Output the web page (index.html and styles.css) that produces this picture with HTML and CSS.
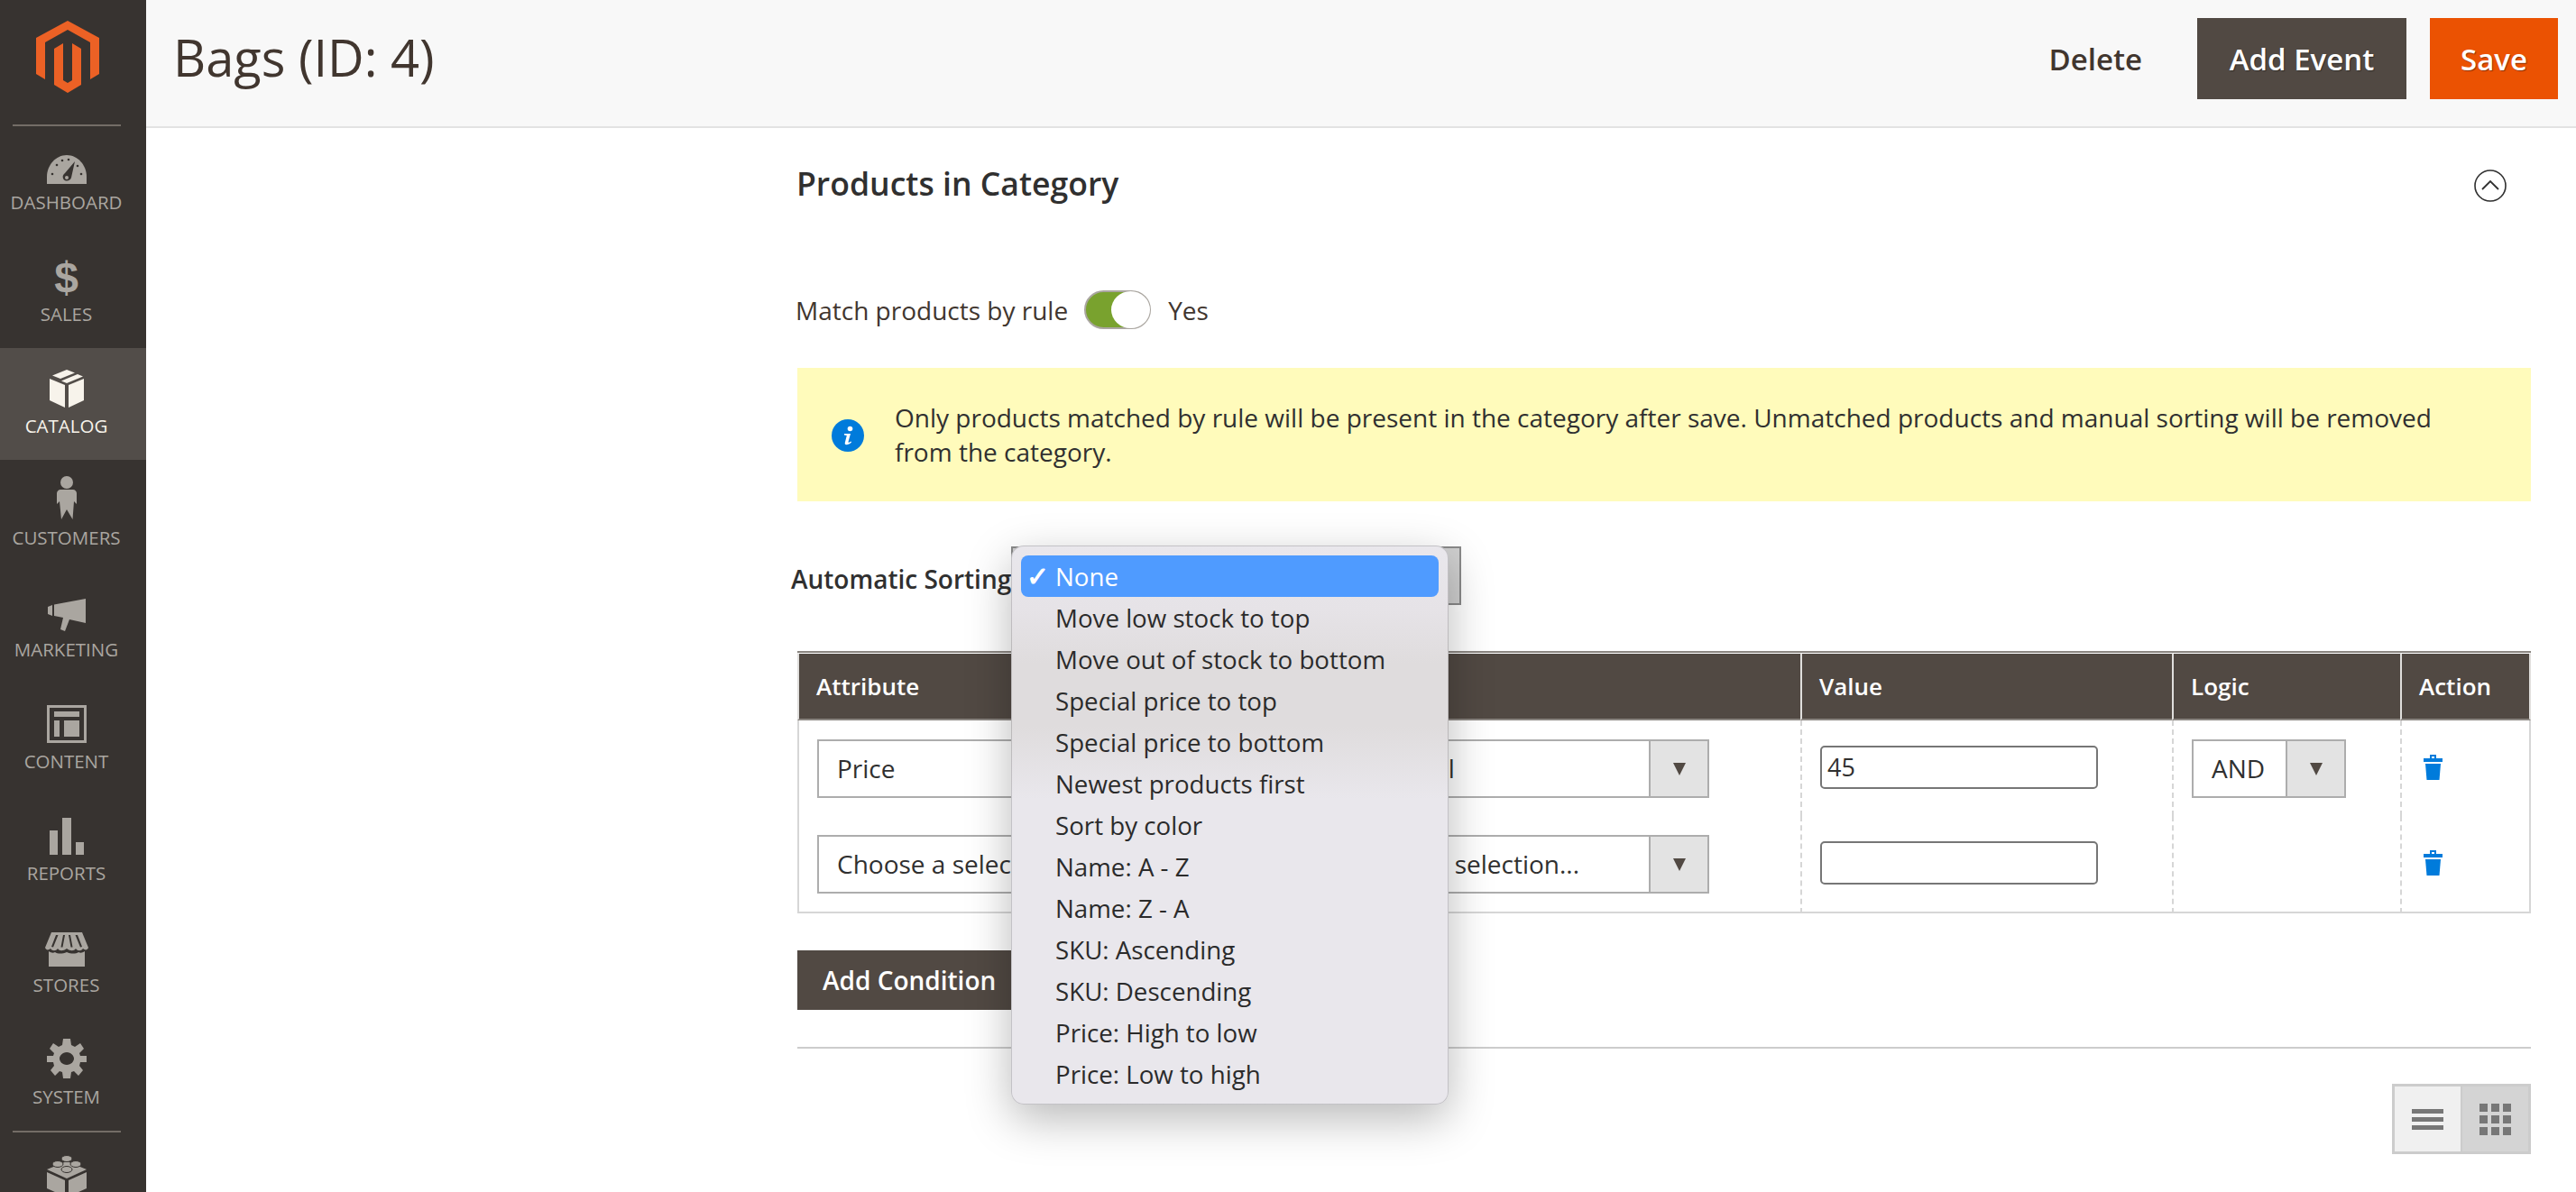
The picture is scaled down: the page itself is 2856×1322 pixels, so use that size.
FILE: index.html
```html
<!DOCTYPE html>
<html lang="en">
<head>
    <meta charset="UTF-8">
    <title>Bags (ID: 4)</title>
    <link rel="stylesheet" href="styles.css">
</head>
<body>
<div class="page">
    <aside class="menu">
        <div class="logo">
            <svg width="70" height="80" viewBox="0 0 70 80"><path d="M35 0L70 19V59L60 65V24L35 10L10 24V65L0 59V19Z"/><path d="M20 31L30 25V66L35 69L40 66V25L50 31V71L35 80L20 71Z"/></svg>
        </div>
        <div class="menu-sep"></div>
        <a class="menu-item">
            <span class="menu-icon"><svg width="44" height="32" viewBox="0 0 44 32"><path d="M0 32V24C0 11 10 0 22 0S44 11 44 24V32Z"/><g fill="#373330"><circle cx="6" cy="21" r="1.3"/><circle cx="11" cy="11" r="1.3"/><circle cx="17" cy="6" r="1.3"/><circle cx="24" cy="5" r="1.3"/><circle cx="38" cy="21" r="1.3"/><circle cx="34" cy="12" r="1.3"/><path d="M31 7L27 25C26 29 20 30 18 26C17 23 18 22 20 20Z"/></g><circle cx="22" cy="25" r="2" fill="#aaa6a0"/></svg></span>
            <span class="menu-label">Dashboard</span>
        </a>
        <a class="menu-item">
            <span class="menu-icon"><span class="dollar">$</span></span>
            <span class="menu-label">Sales</span>
        </a>
        <a class="menu-item active">
            <span class="menu-icon"><svg width="38" height="42" viewBox="0 0 38 42"><path d="M19 0L28 3.5L12 10L3 6.5Z"/><path d="M31 5L37 7.5L19 15L13 12.5L20 9.5Z" /><path d="M0 10L17 17V42L0 34Z"/><path d="M38 10V34L21 42V17Z"/></svg></span>
            <span class="menu-label">Catalog</span>
        </a>
        <a class="menu-item">
            <span class="menu-icon"><svg width="22" height="48" viewBox="0 0 22 48"><circle cx="11" cy="7" r="7"/><path d="M4 15H18C20 15 22 17 22 19V31L19 28L17.500 48L11 37L5 48L3 28L0 31V19C0 17 2 15 4 15Z"/></svg></span>
            <span class="menu-label">Customers</span>
        </a>
        <a class="menu-item">
            <span class="menu-icon"><svg width="42" height="36" viewBox="0 0 42 36"><path d="M0 9L5 7V19L0 17Z"/><path d="M7 6.500L42 0V27L24 23L19 36L14 34L17 21L7 19Z"/></svg></span>
            <span class="menu-label">Marketing</span>
        </a>
        <a class="menu-item">
            <span class="menu-icon"><svg width="44" height="42" viewBox="0 0 44 42"><path fill-rule="evenodd" d="M0 0H44V42H0ZM3 3V39H41V3Z"/><path d="M8 7H36V13H8ZM8 17H14V35H8ZM19 17H36V35H19Z"/></svg></span>
            <span class="menu-label">Content</span>
        </a>
        <a class="menu-item">
            <span class="menu-icon"><svg width="38" height="41" viewBox="0 0 38 41"><path d="M0 14H9V41H0ZM14 0H24V41H14ZM29 27H38V41H29Z"/></svg></span>
            <span class="menu-label">Reports</span>
        </a>
        <a class="menu-item">
            <span class="menu-icon"><svg width="48" height="38" viewBox="0 0 48 38"><path d="M7 0H41L48 17C47 20 44 20 42 18C40 21 36 21 34 18C32 21 28 21 24 18C20 21 16 21 14 18C12 21 8 21 6 18C4 20 1 20 0 17Z"/><path d="M4 21C7 23 9 23 11 22C14 24 19 24 24 22C29 24 34 24 37 22C39 23 41 23 44 21V38H4Z"/><g fill="#373330"><path d="M12 3L7 16L9 16.500L14.500 3Z"/><path d="M20 3L17.500 16.500L19.500 16.500L22 3Z"/><path d="M26 3L28.500 16.500L30.500 16.500L28 3Z"/><path d="M33.500 3L39 16.500L41 16L36 3Z"/></g></svg></span>
            <span class="menu-label">Stores</span>
        </a>
        <a class="menu-item">
            <span class="menu-icon"><svg width="44" height="44" viewBox="0 0 44 44"><path fill-rule="evenodd" d="M18 0H26L27 7L31 9L37 5L41 11L36 16L37 19L44 19V26L37 26L36 30L40 35L35 41L30 36L27 37L26 44H18L17 37L14 36L9 41L4 35L8 30L7 26L0 26V19L7 19L8 16L3 11L7 5L13 9L17 7ZM22 15C17 15 14 19 14 22S17 29 22 29S30 25 30 22S27 15 22 15Z"/></svg></span>
            <span class="menu-label">System</span>
        </a>
        <div class="menu-sep"></div>
        <a class="menu-item last">
            <span class="menu-icon"><svg width="44" height="46" viewBox="0 0 44 46"><path d="M22 7L44 16L22 26L0 16Z"/><path d="M0 19L20 28V46L0 37Z"/><path d="M44 19V37L24 46V28Z"/><g stroke="#373330" stroke-width="1"><ellipse cx="22" cy="4" rx="6" ry="3.500"/><ellipse cx="12" cy="10" rx="6" ry="3.500"/><ellipse cx="32" cy="10" rx="6" ry="3.500"/><ellipse cx="22" cy="16" rx="6" ry="3.500"/></g></svg></span>
        </a>
    </aside>

    <div class="main">
        <header class="page-head">
            <h1 class="page-title">Bags (ID: 4)</h1>
            <div class="page-actions">
                <a class="btn-link">Delete</a>
                <a class="btn btn-dark">Add Event</a>
                <a class="btn btn-save">Save</a>
            </div>
        </header>

        <div class="content">
            <div class="section-head">
                <h2 class="section-title">Products in Category</h2>
                <svg class="collapse" width="36" height="36" viewBox="0 0 36 36"><circle cx="18" cy="18" r="17" fill="none" stroke="#303030" stroke-width="1.600"/><path d="M9 22L18 13L27 22" fill="none" stroke="#303030" stroke-width="1.800"/></svg>
            </div>

            <div class="match-row">
                <span>Match products by rule</span>
                <span class="toggle"><span class="toggle-knob"></span></span>
                <span>Yes</span>
            </div>

            <div class="notice">
                <svg class="notice-icon" width="36" height="36" viewBox="0 0 36 36"><circle cx="18" cy="18" r="18" fill="#007bdb"/><circle cx="20.500" cy="10.500" r="2.800" fill="#fff"/><path d="M14 16H21L18.500 25C18.300 26 19 26.300 21.500 24.500L22 25.500C19 28.500 14 29.500 14.800 26L16.800 18L14 17.500Z" fill="#fff"/></svg>
                <p class="notice-text">Only products matched by rule will be present in the category after save. Unmatched products and manual sorting will be removed from the category.</p>
            </div>

            <div class="sort-row">
                <span class="sort-label">Automatic Sorting</span>
                <div class="sort-select">
                    <ul class="popup">
                        <li class="selected">None</li>
                        <li>Move low stock to top</li>
                        <li>Move out of stock to bottom</li>
                        <li>Special price to top</li>
                        <li>Special price to bottom</li>
                        <li>Newest products first</li>
                        <li>Sort by color</li>
                        <li>Name: A - Z</li>
                        <li>Name: Z - A</li>
                        <li>SKU: Ascending</li>
                        <li>SKU: Descending</li>
                        <li>Price: High to low</li>
                        <li>Price: Low to high</li>
                    </ul>
                </div>
            </div>

            <table class="rules">
                <thead>
                    <tr>
                        <th class="col-attr">Attribute</th>
                        <th class="col-oper">Operator</th>
                        <th class="col-value">Value</th>
                        <th class="col-logic">Logic</th>
                        <th class="col-action">Action</th>
                    </tr>
                </thead>
                <tbody>
                    <tr>
                        <td><div class="select"><span class="select-text">Price</span><span class="select-arrow"></span></div></td>
                        <td><div class="select"><span class="select-text">Not equal</span><span class="select-arrow"></span></div></td>
                        <td><div class="input">45</div></td>
                        <td><div class="select select-small"><span class="select-text">AND</span><span class="select-arrow"></span></div></td>
                        <td><svg class="trash" width="21" height="28" viewBox="0 0 21 28"><path fill-rule="evenodd" d="M7 0H14V4H21V8H0V4H7ZM9 2V4H12V2Z"/><path d="M2 10H19L17.500 28H3.500Z"/></svg></td>
                    </tr>
                    <tr>
                        <td><div class="select"><span class="select-text">Choose a selection...</span><span class="select-arrow"></span></div></td>
                        <td><div class="select"><span class="select-text">Choose a selection...</span><span class="select-arrow"></span></div></td>
                        <td><div class="input"></div></td>
                        <td></td>
                        <td><svg class="trash" width="21" height="28" viewBox="0 0 21 28"><path fill-rule="evenodd" d="M7 0H14V4H21V8H0V4H7ZM9 2V4H12V2Z"/><path d="M2 10H19L17.500 28H3.500Z"/></svg></td>
                    </tr>
                </tbody>
            </table>

            <a class="btn btn-add">Add Condition</a>
            <div class="rule-line"></div>

            <div class="view-switch">
                <span class="view-btn">
                    <svg width="35" height="23" viewBox="0 0 35 23" fill="#777"><path d="M0 0H35V5H0ZM0 9H35V14H0ZM0 18H35V23H0Z"/></svg>
                </span>
                <span class="view-btn on">
                    <svg width="35" height="35" viewBox="0 0 35 35" fill="#777"><path d="M0 0H9V9H0ZM13 0H22V9H13ZM26 0H35V9H26ZM0 13H9V22H0ZM13 13H22V22H13ZM26 13H35V22H26ZM0 26H9V35H0ZM13 26H22V35H13ZM26 26H35V35H26Z"/></svg>
                </span>
            </div>
        </div>
    </div>
</div>
</body>
</html>
```

FILE: styles.css
```css
*{
    margin: 0;
    padding: 0;
    box-sizing: border-box;
}
html,body{
    height: 100%;
    overflow: hidden;
}
body{
    font-family: "Open Sans", "Liberation Sans", sans-serif;
    font-size: 28px;
    color: #303030;
    background: #fff;
}
ul{
    list-style: none;
}
.page{
    display: flex;
    height: 1322px;
}

/* left menu */
.menu{
    width: 162px;
    flex: none;
    background: #373330;
    height: 100%;
    overflow: hidden;
}
.logo{
    height: 138px;
    padding: 23px 12px 0 0;
    display: flex;
    justify-content: center;
}
.logo svg{
    fill: #ec6125;
}
.menu-sep{
    height: 2px;
    margin: 0 28px -2px 14px;
    background: #736d66;
    position: relative;
}
.menu-item{
    display: block;
    height: 124px;
    padding: 16px 15px 0 0;
    text-align: center;
    color: #aaa6a0;
}
.menu-item.active{
    background: #524d49;
    color: #f7f3eb;
}
.menu-icon{
    display: flex;
    height: 50px;
    margin-bottom: 6px;
    justify-content: center;
    align-items: flex-end;
}
.menu-icon svg{
    fill: currentColor;
    display: block;
}
.dollar{
    font-family: "Liberation Sans", sans-serif;
    font-weight: 700;
    font-size: 48px;
    line-height: 50px;
    margin-bottom: -5px;
}
.menu-label{
    display: block;
    font-size: 20.5px;
    line-height: 28px;
    text-transform: uppercase;
    white-space: nowrap;
}
.menu-item.last{
    padding-top: 0;
    margin-top: 23px;
}

/* top bar */
.main{
    flex: 1;
    min-width: 0;
}
.page-head{
    height: 142px;
    background: #f8f8f8;
    border-bottom: 2px solid #e3e3e3;
    display: flex;
    justify-content: space-between;
    align-items: flex-start;
    padding: 20px 20px 0 30px;
}
.page-title{
    font-size: 56px;
    font-weight: 400;
    line-height: 86px;
    color: #41362f;
}
.page-actions{
    display: flex;
    align-items: center;
}
.btn-link{
    font-size: 33px;
    font-weight: 600;
    color: #41362f;
    margin-right: 61px;
}
.btn{
    display: flex;
    align-items: center;
    justify-content: center;
    font-weight: 600;
    color: #fff;
}
.btn-dark{
    width: 232px;
    height: 90px;
    background: #514943;
    font-size: 33px;
    text-shadow: 1px 1px 1px rgba(0,0,0,.4);
    margin-right: 26px;
}
.btn-save{
    width: 142px;
    height: 90px;
    background: #eb5202;
    font-size: 33px;
    text-shadow: 1px 1px 1px rgba(0,0,0,.4);
}

/* content */
.content{
    padding: 0 50px 0 722px;
}
.section-head{
    display: flex;
    justify-content: space-between;
    align-items: flex-start;
    height: 180px;
    padding-top: 38px;
}
.section-title{
    font-size: 35.6px;
    font-weight: 600;
    line-height: 46px;
    margin-left: -1px;
}
.collapse{
    margin: 8px 27px 0 0;
}
.match-row{
    display: flex;
    align-items: center;
    height: 43px;
    margin-bottom: 43px;
    margin-left: -2px;
    color: #41362f;
}
.toggle{
    display: block;
    position: relative;
    width: 74px;
    height: 43px;
    margin: 0 19px 0 18px;
    background: #79a22e;
    border: 2px solid #aaa6a0;
    border-radius: 22px;
}
.toggle-knob{
    position: absolute;
    right: -1px;
    top: -1px;
    width: 43px;
    height: 41px;
    background: #fff;
    border-radius: 50%;
}
.notice{
    display: flex;
    align-items: center;
    height: 148px;
    padding: 0 40px 0 38px;
    background: #fffbbb;
    color: #303030;
}
.notice-icon{
    flex: none;
    margin-right: 34px;
    margin-top: 2px;
}
.notice-text{
    line-height: 38px;
}

.sort-row{
    display: flex;
    align-items: flex-start;
    margin: 50px 0 44px -7px;
}
.sort-label{
    flex: none;
    font-weight: 600;
    line-height: 72px;
    width: 244px;
    white-space: nowrap;
    color: #303030;
}
.sort-select{
    position: relative;
    width: 499px;
    height: 65px;
    background: #d0d0d0;
    border: 2px solid #8a8a8a;
    z-index: 5;
}
.popup{
    position: absolute;
    left: -2px;
    top: -3px;
    width: 485px;
    height: 620px;
    padding: 10px 10px 0;
    background: linear-gradient(#e9e7ec 0, #e6e3e7 70px, #dfdcdd 130px, #dfdcdd 200px, #e9e7ec 280px);
    border: 1px solid rgba(0,0,0,.16);
    border-radius: 14px;
    box-shadow: 0 16px 50px rgba(0,0,0,.28);
    font-size: 27.7px;
    color: #2b2b2b;
}
.popup li{
    position: relative;
    height: 46px;
    line-height: 46px;
    padding-left: 38px;
    white-space: nowrap;
}
.popup .selected{
    background: #4f9bff;
    border-radius: 8px;
    color: #fff;
}
.popup .selected:before{
    content: "\2713";
    position: absolute;
    left: 6px;
    font-size: 30px;
    font-weight: 700;
}

/* rule table */
.rules{
    width: 1922px;
    table-layout: fixed;
    border-collapse: separate;
    border-spacing: 0;
    border-top: 2px solid #8a8580;
}
.rules th{
    height: 75px;
    padding: 0 19px;
    background: #514943;
    color: #fff;
    font-weight: 600;
    font-size: 26px;
    text-align: left;
    border-top: 1px solid #fff;
    border-left: 2px solid #e0dedc;
    border-bottom: 2px solid #8a8580;
}
.rules th:last-child{
    border-right: 2px solid #e0dedc;
}
.col-attr{
    width: 557px;
}
.col-oper{
    width: 555px;
}
.col-value{
    width: 412px;
}
.col-logic{
    width: 253px;
}
.rules td{
    vertical-align: top;
    padding: 21px 20px 20px;
    border-left: 2px dashed #d6d6d6;
}
.rules td:first-child{
    border-left: 2px solid #d6d6d6;
}
.rules td:last-child{
    border-right: 2px solid #d6d6d6;
}
.rules tbody tr:last-child td{
    border-bottom: 2px solid #d6d6d6;
}
.select{
    display: flex;
    width: 432px;
    height: 65px;
    border: 2px solid #adadad;
    background: #fff;
}
.select-text{
    flex: 1;
    line-height: 61px;
    padding-left: 20px;
    white-space: nowrap;
    overflow: hidden;
    color: #303030;
}
.select-arrow{
    flex: none;
    display: flex;
    align-items: center;
    justify-content: center;
    width: 65px;
    background: #e3e3e3;
    border-left: 2px solid #adadad;
}
.select-arrow:after{
    content: "";
    border-top: 14px solid #514943;
    border-left: 7px solid transparent;
    border-right: 7px solid transparent;
}
.select-small{
    width: 171px;
}
.input{
    width: 308px;
    height: 48px;
    margin-top: 7px;
    padding-left: 6px;
    line-height: 44px;
    border: 2px solid #767676;
    border-radius: 5px;
    font-size: 27px;
}
.trash{
    display: block;
    margin: 17px 0 0 4px;
    fill: #007bdb;
}
.btn-add{
    justify-content: flex-start;
    width: 237px;
    height: 66px;
    margin-top: 41px;
    padding-left: 28px;
    background: #514943;
    font-size: 28px;
}
.rule-line{
    height: 2px;
    margin: 41px 0 39px;
    background: #cccccc;
}
.view-switch{
    display: flex;
    width: 154px;
    height: 78px;
    margin-left: auto;
    border: 3px solid #cccccc;
}
.view-btn{
    flex: 1;
    display: flex;
    align-items: center;
    justify-content: center;
    background: #f0f0f0;
}
.view-btn.on{
    background: #d4d4d4;
    border-left: 2px solid #cccccc;
}
```
